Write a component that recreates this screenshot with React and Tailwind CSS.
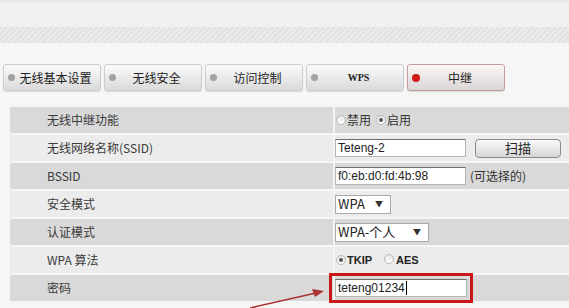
const tabs = [
  { label: "无线基本设置" },
  { label: "无线安全" },
  { label: "访问控制" },
  { label: "WPS", latin: true },
  { label: "中继", active: true },
];

function Radio({ checked }) {
  return (
    <span className="inline-block w-[10px] h-[10px] rounded-full border border-[#b8b8b8] bg-gradient-to-b from-[#e6e6e6] to-white relative">
      {checked && (
        <span className="absolute left-[2px] top-[2px] w-[4px] h-[4px] rounded-full bg-[#555]" />
      )}
    </span>
  );
}

function Row({ label, dark, children }) {
  return (
    <div className={`flex h-[26px] ${dark ? "bg-[#d9d9d9]" : "bg-[#ececec]"}`}>
      <div className="w-[323px] pl-[37px] flex items-center text-[12px] text-[#3a3a3a]">{label}</div>
      <div className="flex-1 border-l-2 border-[#f3f3f3] flex items-center">{children}</div>
    </div>
  );
}

function TextBox({ value, w = "w-[131px]", cursor }) {
  return (
    <div className={`${w} h-[18px] bg-white border border-[#b5b5b5] border-t-[#6e6e6e] flex items-center pl-[2px] text-[12px] text-[#222] font-['Liberation_Sans',sans-serif]`}>
      {value}
      {cursor && <span className="inline-block w-px h-[14px] bg-black ml-px" />}
    </div>
  );
}

function Select({ value, w }) {
  return (
    <div className={`${w} h-[19px] bg-white border border-[#a9a9a9] flex items-center justify-between pl-[2px] pr-[7px] text-[13px] text-[#222]`}>
      <span>{value}</span>
      <span className="text-[8px] text-[#333]">▼</span>
    </div>
  );
}

export default function App() {
  return (
    <div className="w-[569px] h-[308px] bg-[#f6f6f6] relative overflow-hidden font-['Noto_Sans_CJK_SC',sans-serif]">
      {/* header band */}
      <div className="h-[27px] bg-[#f1f1f1] border-t-[3px] border-[#e8e8e8]" />
      <div className="h-[16px] bg-[repeating-linear-gradient(135deg,#e2e2e2_0px,#e2e2e2_2px,#ebebeb_2px,#ebebeb_4px)]" />

      {/* tabs */}
      <div className="flex gap-[3px] pl-[3px] mt-[21px]">
        {tabs.map((t) => (
          <div
            key={t.label}
            className={`w-[98px] h-[27px] rounded-[3px] border flex items-center shadow-[0_1px_1px_rgba(0,0,0,0.12)] ${
              t.active
                ? "border-[#c79a9a] bg-gradient-to-b from-[#fbf6f6] to-[#dcd6d6]"
                : "border-[#cdcdcd] bg-gradient-to-b from-[#fbfbfb] to-[#dadada]"
            }`}
          >
            <span
              className={`ml-[4px] rounded-full ${
                t.active ? "w-[8px] h-[8px] bg-[#d21a1a]" : "w-[7px] h-[7px] bg-[#a2a2a2]"
              }`}
            />
            <span
              className={`flex-1 text-center pr-[4px] text-[#222] ${
                t.latin ? "text-[10px] font-['Liberation_Serif',serif] font-bold" : "text-[12px]"
              }`}
            >
              {t.label}
            </span>
          </div>
        ))}
      </div>

      {/* settings table */}
      <div className="ml-[10px] mt-[16px] flex flex-col gap-[2px]">
        <Row label="无线中继功能" dark>
          <div className="flex items-center text-[12px] text-[#333] pl-[1px]">
            <Radio />
            <span className="ml-[1px]">禁用</span>
            <span className="ml-[5px]"><Radio checked /></span>
            <span className="ml-[1px]">启用</span>
          </div>
        </Row>
        <Row label="无线网络名称(SSID)">
          <TextBox value="Teteng-2" />
          <div className="ml-[9px] w-[86px] h-[19px] rounded-[4px] border border-[#8a8a8a] bg-gradient-to-b from-[#fafafa] to-[#d6d6d6] flex items-center justify-center text-[13px] text-[#222]">
            扫描
          </div>
        </Row>
        <Row label="BSSID" dark>
          <TextBox value="f0:eb:d0:fd:4b:98" />
          <span className="ml-[4px] text-[12px] text-[#333]">(可选择的)</span>
        </Row>
        <Row label="安全模式">
          <Select value="WPA" w="w-[56px]" />
        </Row>
        <Row label="认证模式" dark>
          <Select value="WPA-个人" w="w-[94px]" />
        </Row>
        <Row label="WPA 算法">
          <div className="flex items-center pl-[1px] text-[11px] font-bold text-[#222] font-['Liberation_Sans',sans-serif]">
            <Radio checked />
            <span className="ml-[1px]">TKIP</span>
            <span className="ml-[12px]"><Radio /></span>
            <span className="ml-[2px]">AES</span>
          </div>
        </Row>
        <Row label="密码" dark>
          <div className="outline-[3px] outline outline-[#c81818] outline-offset-[3px]">
            <TextBox value="teteng01234" w="w-[132px]" cursor />
          </div>
        </Row>
      </div>

      {/* annotation arrow */}
      <svg className="absolute left-0 top-0" width="569" height="308" viewBox="0 0 569 308">
        <line x1="250" y1="308" x2="316" y2="293" stroke="#a83232" strokeWidth="1.5" />
        <polygon points="324,291 312,289 315,297" fill="#a83232" />
      </svg>
    </div>
  );
}
